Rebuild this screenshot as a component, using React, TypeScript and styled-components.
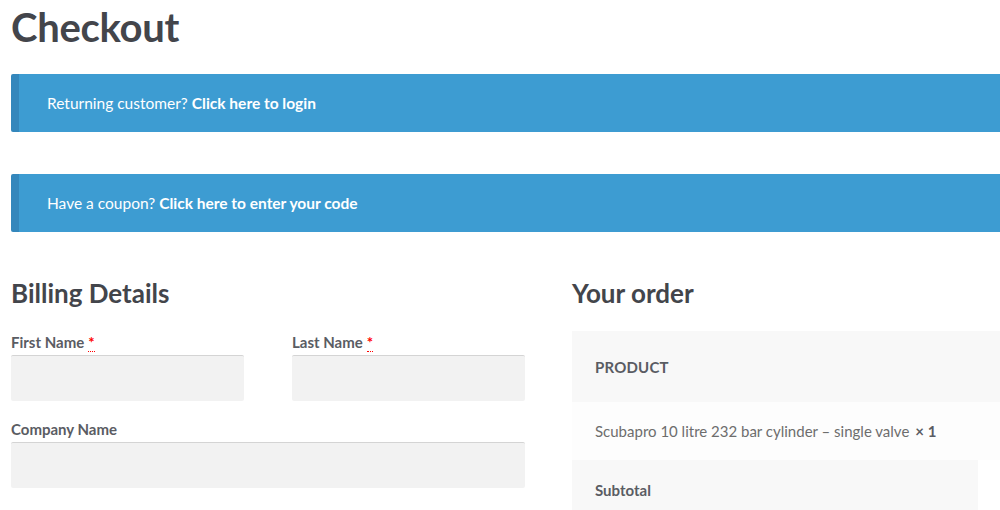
import styled, { createGlobalStyle } from 'styled-components';

const Global = createGlobalStyle`
  html, body {
    margin: 0;
    padding: 0;
    background: #fff;
    overflow: hidden;
    width: 1000px;
    height: 510px;
  }
  body {
    font-family: Lato, "Open Sans", sans-serif;
    color: #6d6d6d;
  }
`;

const Page = styled.div`
  width: 1100px;
  padding: 0 0 0 11px;
  box-sizing: border-box;
`;

const Title = styled.h1`
  margin: 0;
  padding-top: 4px;
  height: 74px;
  box-sizing: border-box;
  font-size: 40px;
  line-height: 46px;
  font-weight: 700;
  color: #43454b;
  letter-spacing: -0.3px;
`;

const Notice = styled.div`
  display: flex;
  align-items: center;
  height: 58px;
  margin-bottom: 42px;
  padding-left: 28px;
  background: #3d9cd2;
  border-left: 8px solid #3487bc;
  border-radius: 2px;
  color: #fff;
  font-size: 15.5px;
  box-sizing: border-box;
  b {
    font-weight: 700;
    margin-left: 4px;
  }
`;

const Columns = styled.div`
  display: flex;
  gap: 47px;
  margin-top: 46px;
`;

const Billing = styled.div`
  width: 514px;
`;

const Order = styled.div`
  flex: 1;
`;

const SectionTitle = styled.h3`
  margin: 0;
  height: 53px;
  font-size: 26px;
  line-height: 30px;
  font-weight: 700;
  color: #43454b;
`;

const Row = styled.div`
  display: flex;
  justify-content: space-between;
`;

const Field = styled.div<{ $wide?: boolean }>`
  width: ${(p) => (p.$wide ? '514px' : '233px')};
  margin-bottom: 17px;
`;

const Label = styled.label`
  display: block;
  font-size: 15px;
  line-height: 22px;
  font-weight: 700;
  color: #5a5c63;
  margin-bottom: 2px;
  abbr {
    color: red;
    text-decoration: none;
    border-bottom: 1px dotted red;
    margin-left: 4px;
  }
`;

const Input = styled.div`
  height: 46px;
  background: #f2f2f2;
  border-top: 1px solid #d4d4d4;
  border-radius: 2px;
  box-sizing: border-box;
`;

const Table = styled.div`
  display: flex;
  flex-direction: column;
`;

const Cell = styled.div<{ $bg: string; $h: number; $w?: number }>`
  display: flex;
  align-items: center;
  height: ${(p) => p.$h}px;
  width: ${(p) => (p.$w ? `${p.$w}px` : 'auto')};
  padding-left: 23px;
  background: ${(p) => p.$bg};
  font-size: 15px;
  color: #6d6d6d;
  box-sizing: border-box;
`;

const Head = styled.span`
  font-weight: 700;
  text-transform: uppercase;
  color: #5a5c63;
  letter-spacing: 0.2px;
`;

const Strong = styled.span<{ $gap?: number }>`
  font-weight: 700;
  color: #5a5c63;
  margin-left: ${(p) => p.$gap ?? 0}px;
`;

export default function App() {
  return (
    <Page>
      <Global />
      <Title>Checkout</Title>
      <Notice>
        Returning customer? <b>Click here to login</b>
      </Notice>
      <Notice>
        Have a coupon? <b>Click here to enter your code</b>
      </Notice>
      <Columns>
        <Billing>
          <SectionTitle>Billing Details</SectionTitle>
          <Row>
            <Field>
              <Label>
                First Name<abbr title="required">*</abbr>
              </Label>
              <Input />
            </Field>
            <Field>
              <Label>
                Last Name<abbr title="required">*</abbr>
              </Label>
              <Input />
            </Field>
          </Row>
          <Field $wide>
            <Label>Company Name</Label>
            <Input />
          </Field>
        </Billing>
        <Order>
          <SectionTitle>Your order</SectionTitle>
          <Table>
            <Cell $bg="#f8f8f8" $h={71}>
              <Head>Product</Head>
            </Cell>
            <Cell $bg="#fdfdfd" $h={58}>
              Scubapro 10 litre 232 bar cylinder – single valve
              <Strong $gap={6}>× 1</Strong>
            </Cell>
            <Cell $bg="#f8f8f8" $h={60} $w={406}>
              <Strong>Subtotal</Strong>
            </Cell>
          </Table>
        </Order>
      </Columns>
    </Page>
  );
}
